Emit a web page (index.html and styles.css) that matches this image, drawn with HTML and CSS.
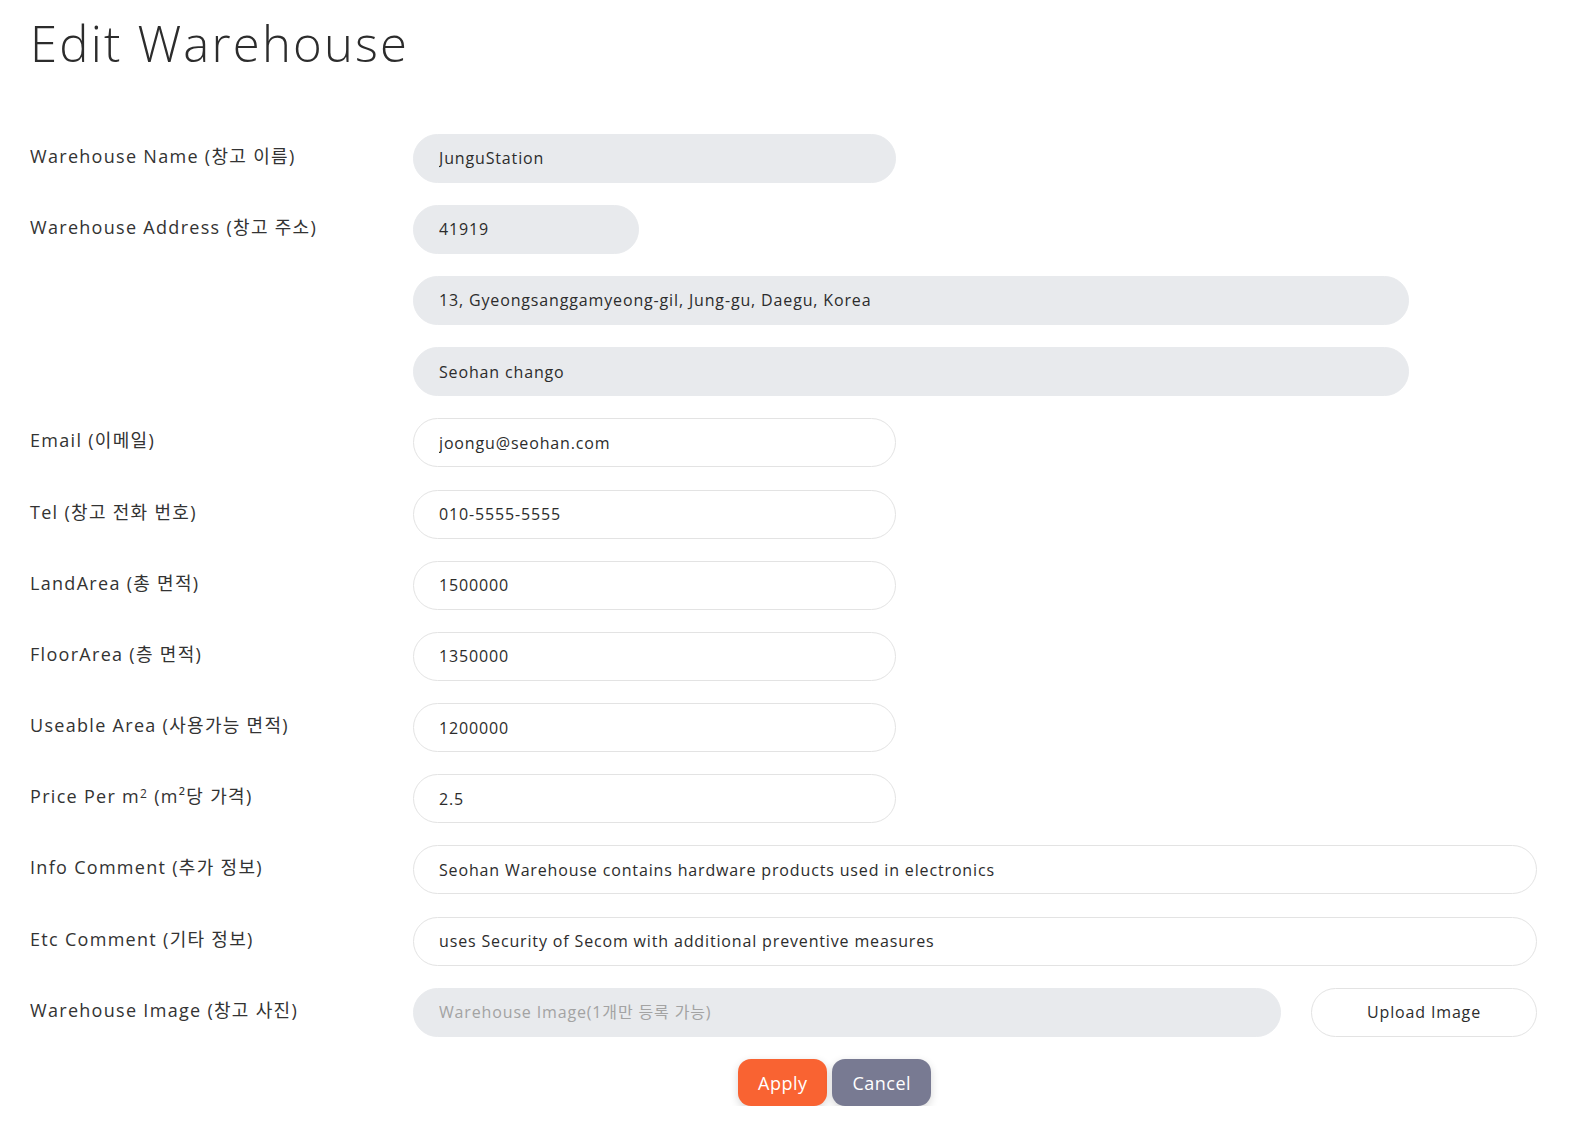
FILE: index.html
```html
<!DOCTYPE html>
<html lang="ko">
<head>
<meta charset="utf-8">
<title>Edit Warehouse</title>
<link rel="stylesheet" href="styles.css">
</head>
<body>
<div class="page">
  <h1 class="title">Edit Warehouse</h1>
  <form class="form">
    <div class="row">
      <label class="label">Warehouse Name (창고 이름)</label>
      <div class="field"><input class="input short ro" type="text" value="JunguStation" readonly></div>
    </div>
    <div class="row">
      <label class="label">Warehouse Address (창고 주소)</label>
      <div class="field stack">
        <input class="input zip ro" type="text" value="41919" readonly>
        <input class="input addr ro" type="text" value="13, Gyeongsanggamyeong-gil, Jung-gu, Daegu, Korea" readonly>
        <input class="input addr ro" type="text" value="Seohan chango" readonly>
      </div>
    </div>
    <div class="row">
      <label class="label">Email (이메일)</label>
      <div class="field"><input class="input short" type="text" value="joongu@seohan.com"></div>
    </div>
    <div class="row">
      <label class="label">Tel (창고 전화 번호)</label>
      <div class="field"><input class="input short" type="text" value="010-5555-5555"></div>
    </div>
    <div class="row">
      <label class="label">LandArea (총 면적)</label>
      <div class="field"><input class="input short" type="text" value="1500000"></div>
    </div>
    <div class="row">
      <label class="label">FloorArea (층 면적)</label>
      <div class="field"><input class="input short" type="text" value="1350000"></div>
    </div>
    <div class="row">
      <label class="label">Useable Area (사용가능 면적)</label>
      <div class="field"><input class="input short" type="text" value="1200000"></div>
    </div>
    <div class="row">
      <label class="label">Price Per m<sup class="sup">2</sup> (m²당 가격)</label>
      <div class="field"><input class="input short" type="text" value="2.5"></div>
    </div>
    <div class="row">
      <label class="label">Info Comment (추가 정보)</label>
      <div class="field"><input class="input full" type="text" value="Seohan Warehouse contains hardware products used in electronics"></div>
    </div>
    <div class="row">
      <label class="label">Etc Comment (기타 정보)</label>
      <div class="field"><input class="input full" type="text" value="uses Security of Secom with additional preventive measures"></div>
    </div>
    <div class="row">
      <label class="label">Warehouse Image (창고 사진)</label>
      <div class="field upload">
        <input class="input ro" type="text" placeholder="Warehouse Image(1개만 등록 가능)" readonly>
        <button class="upload-btn" type="button">Upload Image</button>
      </div>
    </div>
    <div class="actions">
      <button class="btn btn-apply" type="button">Apply</button>
      <button class="btn btn-cancel" type="button">Cancel</button>
    </div>
  </form>
</div>
</body>
</html>
```

FILE: styles.css
```css
* { box-sizing: border-box; }

html, body {
  margin: 0;
  padding: 0;
  background: #ffffff;
}

body {
  font-family: "Open Sans", "Noto Sans CJK KR", sans-serif;
  color: #2c2c2c;
}

.page {
  padding: 15px 38px 0 30px;
}

.title {
  margin: 0 0 61px 0;
  font-size: 49px;
  font-weight: 300;
  line-height: 57.6px;
  letter-spacing: 2.2px;
  color: #2c2c2c;
}

.form {
  display: flex;
  flex-direction: column;
  gap: 22.2px;
}

.row {
  display: grid;
  grid-template-columns: 383px 1fr;
}

.label {
  font-size: 18px;
  line-height: 27px;
  padding-top: 9px;
  letter-spacing: 1.3px;
  color: #333333;
  font-family: "Open Sans", "Noto Sans CJK KR", sans-serif;
}

.sup {
  font-size: 12px;
  vertical-align: top;
  position: relative;
  top: -3px;
}

.field {
  display: flex;
}

.stack {
  flex-direction: column;
  gap: 22.2px;
}

.input {
  height: 49px;
  border: 1px solid #e3e3e3;
  border-radius: 30px;
  background: #ffffff;
  padding: 0 20px 0 25px;
  font-family: "Open Sans", "Noto Sans CJK KR", sans-serif;
  font-size: 16px;
  letter-spacing: 0.85px;
  color: #2c2c2c;
  outline: none;
}

.input.ro {
  background: #e8eaed;
  border-color: #e8eaed;
}

.input::placeholder {
  color: #a3a3a3;
}

.short { width: 483px; }
.zip { width: 226px; }
.addr { width: 996px; }
.full { width: 100%; }

.upload {
  display: grid;
  grid-template-columns: 1fr 226px;
  gap: 30px;
}

.upload .input {
  width: 100%;
}

.upload-btn {
  height: 49px;
  border: 1px solid #e3e3e3;
  border-radius: 30px;
  background: #ffffff;
  font-family: "Open Sans", "Noto Sans CJK KR", sans-serif;
  font-size: 16px;
  letter-spacing: 0.85px;
  color: #2c2c2c;
}

.actions {
  display: flex;
  gap: 5px;
  padding-left: 708px;
}

.btn {
  height: 47px;
  border: none;
  border-radius: 13px;
  padding: 0 20px;
  font-family: "Open Sans", sans-serif;
  font-size: 18px;
  letter-spacing: 0.5px;
  color: #ffffff;
  box-shadow: 0 3px 8px rgba(0, 0, 0, 0.16);
}

.btn-apply { background: #f96332; }
.btn-cancel { background: #787a92; }
```
